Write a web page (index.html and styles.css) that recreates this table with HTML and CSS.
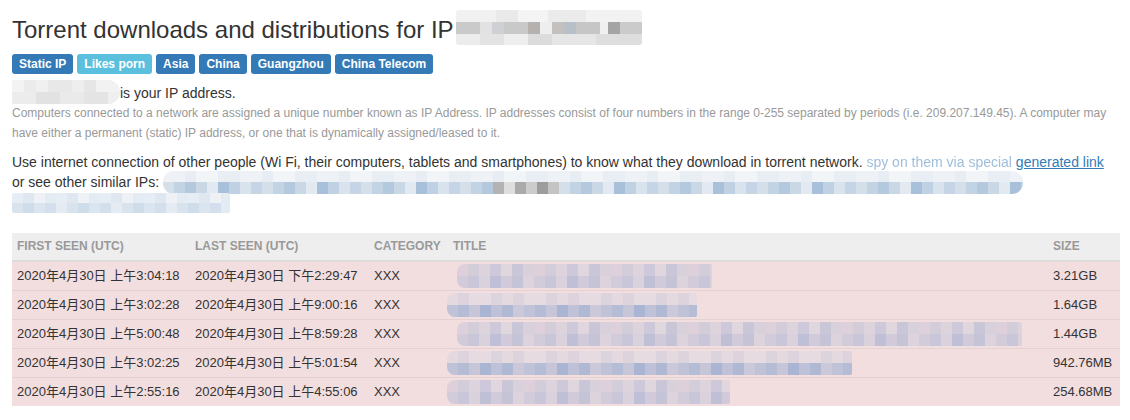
FILE: index.html
```html
<!DOCTYPE html>
<html lang="en">
<head>
<meta charset="utf-8">
<title>Torrent downloads and distributions for IP</title>
<link rel="stylesheet" href="styles.css">
</head>
<body>
<div class="page">
  <h1 class="title">Torrent downloads and distributions for IP<span class="mz mz-title"></span></h1>
  <div class="tags">
    <span class="tag">Static IP</span>
    <span class="tag tag-info">Likes porn</span>
    <span class="tag">Asia</span>
    <span class="tag">China</span>
    <span class="tag">Guangzhou</span>
    <span class="tag">China Telecom</span>
  </div>
  <p class="ip-line"><span class="mz mz-ip"></span>is your IP address.</p>
  <p class="note">Computers connected to a network are assigned a unique number known as IP Address. IP addresses consist of four numbers in the range 0-255 separated by periods (i.e. 209.207.149.45). A computer may have either a permanent (static) IP address, or one that is dynamically assigned/leased to it.</p>
  <p class="lead">Use internet connection of other people (Wi Fi, their computers, tablets and smartphones) to know what they download in torrent network. <a class="spy" href="#">spy on them via special</a> <a class="gen" href="#">generated link</a><br>or see other similar IPs: <span class="mz mz-ips"></span><br><span class="mz mz-ips2"></span></p>

  <table class="tbl">
    <thead>
      <tr>
        <th class="c-first">First seen (UTC)</th>
        <th class="c-last">Last seen (UTC)</th>
        <th class="c-cat">Category</th>
        <th class="c-title">Title</th>
        <th class="c-size">Size</th>
      </tr>
    </thead>
    <tbody>
      <tr>
        <td>2020年4月30日 上午3:04:18</td>
        <td>2020年4月30日 下午2:29:47</td>
        <td>XXX</td>
        <td><span class="mz mz-row w1"></span></td>
        <td>3.21GB</td>
      </tr>
      <tr>
        <td>2020年4月30日 上午3:02:28</td>
        <td>2020年4月30日 上午9:00:16</td>
        <td>XXX</td>
        <td><span class="mz mz-row mz-blue w2"></span></td>
        <td>1.64GB</td>
      </tr>
      <tr>
        <td>2020年4月30日 上午5:00:48</td>
        <td>2020年4月30日 上午8:59:28</td>
        <td>XXX</td>
        <td><span class="mz mz-row w3"></span></td>
        <td>1.44GB</td>
      </tr>
      <tr>
        <td>2020年4月30日 上午3:02:25</td>
        <td>2020年4月30日 上午5:01:54</td>
        <td>XXX</td>
        <td><span class="mz mz-row mz-blue w4"></span></td>
        <td>942.76MB</td>
      </tr>
      <tr>
        <td>2020年4月30日 上午2:55:16</td>
        <td>2020年4月30日 上午4:55:06</td>
        <td>XXX</td>
        <td><span class="mz mz-row w5"></span></td>
        <td>254.68MB</td>
      </tr>
    </tbody>
  </table>
</div>
</body>
</html>
```

FILE: styles.css
```css
* { box-sizing: border-box; }

html, body {
  margin: 0;
  padding: 0;
  background: #fff;
}

body {
  font-family: "Liberation Sans", Arial, "Noto Sans CJK SC", sans-serif;
  font-size: 14px;
  line-height: 20px;
  color: #333;
}

.page {
  padding: 17px 10px 0 12px;
}

.title {
  margin: 0;
  font-size: 24px;
  line-height: 26px;
  font-weight: 400;
  color: #333;
}

.mz {
  display: inline-block;
}

.mz-title {
  width: 186px;
  height: 35px;
  margin: -7px 0 -2px 2px;
  vertical-align: top;
  border-radius: 3px;
  background-image:
    linear-gradient(90deg, #f1f1f1 0 40px, #e9e9e9 40px 62px, #f4f4f4 62px 92px, #ebebeb 92px 130px, #f2f2f2 130px 186px),
    linear-gradient(90deg, #cacaca 0 24px, #e2e2e2 24px 36px, #cfd0d3 36px 48px, #c9c9c9 48px 72px, #b5b1af 72px 84px, #eeeeee 84px 96px, #c3c0bd 96px 108px, #b9bfc6 108px 120px, #c6c6c6 120px 144px, #f0f0f0 144px 152px, #a4a4a4 152px 164px, #cbcbcb 164px 186px),
    linear-gradient(90deg, #ececec 0 24px, #e3e3e3 24px 48px, #eeeeee 48px 72px, #dcdcdc 72px 96px, #e6e6e6 96px 140px, #dedede 140px 186px);
  background-size: 100% 12px, 100% 12px, 100% 11px;
  background-position: 0 0, 0 12px, 0 24px;
  background-repeat: no-repeat;
}

.tags {
  display: flex;
  gap: 4px;
  margin-top: 11px;
}

.tag {
  display: inline-block;
  font-size: 12px;
  font-weight: 700;
  line-height: 14px;
  padding: 3px 7px;
  color: #fff;
  background: #337ab7;
  border-radius: 3px;
}

.tag-info {
  background: #5bc0de;
}

.ip-line {
  margin: 9px 0 0;
}

.mz-ip {
  width: 108px;
  height: 24px;
  margin: -3px 0 -1px 0;
  vertical-align: top;
  border-radius: 2px 12px 12px 2px;
  background-image:
    linear-gradient(90deg, #f3f3f3 0 12px, #ebebeb 12px 24px, #f0f0f0 24px 36px, #e8e8e8 36px 60px, #eeeeee 60px 72px, #e6e6e6 72px 84px, #f2f2f2 84px 108px),
    linear-gradient(90deg, #ececec 0 24px, #e2e2e2 24px 48px, #eaeaea 48px 72px, #e4e4e4 72px 96px, #efefef 96px 108px);
  background-size: 100% 12px, 100% 12px;
  background-position: 0 0, 0 12px;
  background-repeat: no-repeat;
}

.note {
  margin: 1px 0 0;
  font-size: 12px;
  line-height: 19.5px;
  color: #999;
}

.lead {
  margin: 9px 0 0;
  line-height: 20px;
}

.lead a {
  color: #337ab7;
}

.spy {
  color: #9fbedb !important;
  text-decoration: none;
  filter: blur(0.3px);
}

.gen {
  text-decoration: underline;
}

.mz-ips {
  width: 860px;
  height: 23px;
  margin: -1px 0 -2px 0;
  vertical-align: top;
  border-radius: 11px;
  background-image:
    linear-gradient(90deg, transparent 0 330px, #b3b3b3 330px 341px, #dedede 341px 352px, #aaaaaa 352px 363px, #cccccc 363px 374px, #9d9d9d 374px 385px, #c4c4c4 385px 396px, transparent 396px),
    repeating-linear-gradient(90deg, #d4dfea 0 11px, #c2d3e4 11px 22px, #b4c9de 22px 33px, #cad8e6 33px 44px, #e2e9f1 44px 55px, #a9c0da 55px 66px, #bfd1e3 66px 77px, #d9e3ee 77px 88px, #c6d5e5 88px 99px),
    repeating-linear-gradient(90deg, #eef2f6 0 22px, #e7edf3 22px 33px, #f2f5f8 33px 55px, #e9eef4 55px 77px);
  background-size: 100% 12px, 100% 12px, 100% 11px;
  background-position: 0 11px, 0 11px, 0 0;
  background-repeat: no-repeat;
}

.mz-ips2 {
  width: 218px;
  height: 20px;
  margin: 1px 0 -1px 0;
  vertical-align: top;
  border-radius: 2px;
  background-image:
    repeating-linear-gradient(90deg, #e6edf4 0 11px, #dfe8f1 11px 22px, #eef2f6 22px 33px, #e3ebf3 33px 44px),
    repeating-linear-gradient(90deg, #d8e3ee 0 11px, #cfdcea 11px 22px, #dbe5ef 22px 33px, #d3dfec 33px 44px, #e4ebf2 44px 55px);
  background-size: 100% 10px, 100% 10px;
  background-position: 0 0, 0 10px;
  background-repeat: no-repeat;
}

.tbl {
  width: 100%;
  margin-top: 21px;
  border-collapse: collapse;
  border-spacing: 0;
  font-size: 13px;
}

.tbl th {
  text-align: left;
  text-transform: uppercase;
  font-size: 12px;
  font-weight: 700;
  line-height: 17px;
  color: #999;
  background: #eee;
  padding: 5px 5px;
  border-bottom: 2px solid #ddd;
  vertical-align: bottom;
}

.tbl td {
  padding: 5px 5px;
  line-height: 18px;
  background: #f2dede;
  border-top: 1px solid #e3d2d4;
  color: #333;
  white-space: nowrap;
  vertical-align: top;
}

.tbl tbody tr:first-child td {
  border-top: 0;
}

.c-first { width: 178px; }
.c-last { width: 179px; }
.c-cat { width: 79px; }
.c-title { width: 600px; }
.c-size { width: 72px; }

.mz-row {
  display: block;
  height: 24px;
  margin: -3px 0;
  border-radius: 8px 2px 2px 8px;
  background-image:
    repeating-linear-gradient(90deg, #ddd0da 0 11px, #d3ccd9 11px 22px, #dcd3dc 22px 33px, #cec9da 33px 44px, #e0d6de 44px 55px, #c9c6d8 55px 66px, #d8d0db 66px 77px),
    repeating-linear-gradient(90deg, #d2cbd9 0 11px, #c8c6d8 11px 22px, #d9d1dc 22px 33px, #bfc0d6 33px 44px, #d0cada 44px 55px, #c5c4d7 55px 66px, #dcd3dd 66px 77px);
  background-size: 100% 12px, 100% 12px;
  background-position: 0 0, 0 12px;
  background-repeat: no-repeat;
}

.mz-blue {
  background-image:
    repeating-linear-gradient(90deg, #e4d9df 0 11px, #ddd3dc 11px 22px, #e6dbe0 22px 44px, #dcd4dd 44px 55px),
    repeating-linear-gradient(90deg, #c0c2d8 0 11px, #b4bcd6 11px 22px, #c6c6d8 22px 33px, #a9b5d2 33px 44px, #bec1d7 44px 55px, #b0b9d4 55px 66px, #cbc8da 66px 77px);
}

.w1 { width: 255px; margin-left: 4px; }
.w2 { width: 250px; margin-left: -6px; }
.w3 { width: 565px; margin-left: 4px; }
.w4 { width: 405px; margin-left: -6px; }
.w5 { width: 283px; margin-left: -6px; }
```
